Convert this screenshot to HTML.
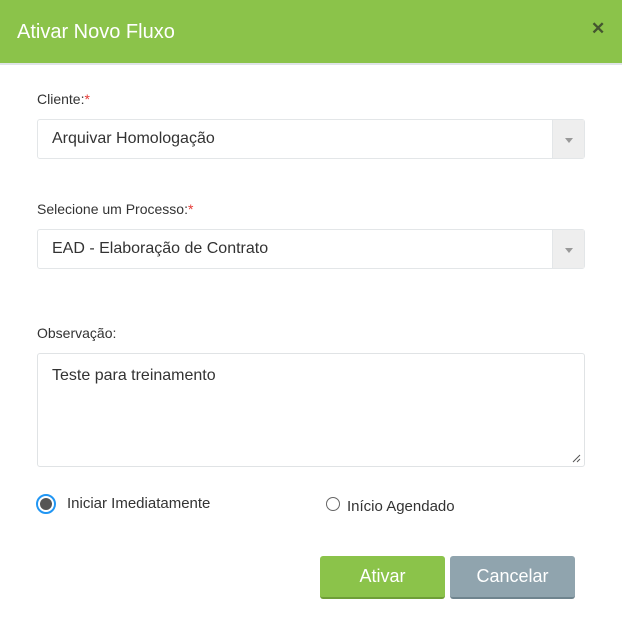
<!DOCTYPE html>
<html><head><meta charset="utf-8"><style>
*{box-sizing:border-box;margin:0;padding:0}
body{width:622px;height:639px;background:#fff;font-family:"Liberation Sans",sans-serif;position:relative;overflow:hidden;color:#333}
.hdr{position:absolute;left:0;top:0;width:622px;height:65px;background:#8bc34a;border-bottom:2px solid #dfe4e8}
.hdr h1{position:absolute;left:17px;top:21px;font-size:20px;font-weight:normal;color:#fff}
.x{position:absolute;left:591px;top:19px;font-size:17px;font-weight:bold;color:#44552f}
.lbl{position:absolute;left:37px;font-size:14px;color:#333}
.lbl b{color:#e53935;font-weight:normal}
.sel{position:absolute;left:37px;width:548px;height:40px;border:1px solid #e3e6e8;border-radius:3px;font-size:16px;padding:10px 14px;color:#333}
.sel .dd{position:absolute;right:0;top:0;width:32px;height:38px;background:#eeeeee;border-left:1px solid #e3e6e8}
.sel .dd:after{content:"";position:absolute;left:12px;top:18px;border:4px solid transparent;border-top:5px solid #999}
.ta{position:absolute;left:37px;top:353px;width:548px;height:114px;border:1px solid #e0e3e5;border-radius:3px;font-size:16px;padding:13px 14px}
.rad{position:absolute;font-size:15px;color:#333}
.btn{position:absolute;top:556px;height:43px;border-radius:3px;color:#fff;font-size:18px;text-align:center;line-height:41px}
</style></head><body>
<div class="hdr"><h1>Ativar Novo Fluxo</h1><div class="x">✕</div></div>
<div class="lbl" style="top:91px">Cliente:<b>*</b></div>
<div class="sel" style="top:119px">Arquivar Homologação<div class="dd"></div></div>
<div class="lbl" style="top:201px">Selecione um Processo:<b>*</b></div>
<div class="sel" style="top:229px">EAD - Elaboração de Contrato<div class="dd"></div></div>
<div class="lbl" style="top:325px">Observação:</div>
<div class="ta">Teste para treinamento
<svg style="position:absolute;right:3px;bottom:3px" width="9" height="9"><path d="M8 1L1 8M8 5L5 8" stroke="#555" stroke-width="1"/></svg></div>
<div style="position:absolute;left:36px;top:494px;width:20px;height:20px;border-radius:50%;border:2px solid #2196f3;background:#fff"><div style="position:absolute;left:2px;top:2px;width:12px;height:12px;border-radius:50%;background:#555"></div></div>
<div class="rad" style="left:67px;top:495px">Iniciar Imediatamente</div>
<div style="position:absolute;left:326px;top:497px;width:14px;height:14px;border-radius:50%;border:1px solid #666"></div>
<div class="rad" style="left:347px;top:498px">Início Agendado</div>
<div class="btn" style="left:320px;width:125px;background:#8bc34a;border-bottom:2px solid #6e9e37">Ativar</div>
<div class="btn" style="left:450px;width:125px;background:#90a4ae;border-bottom:2px solid #6f848e">Cancelar</div>
</body></html>
